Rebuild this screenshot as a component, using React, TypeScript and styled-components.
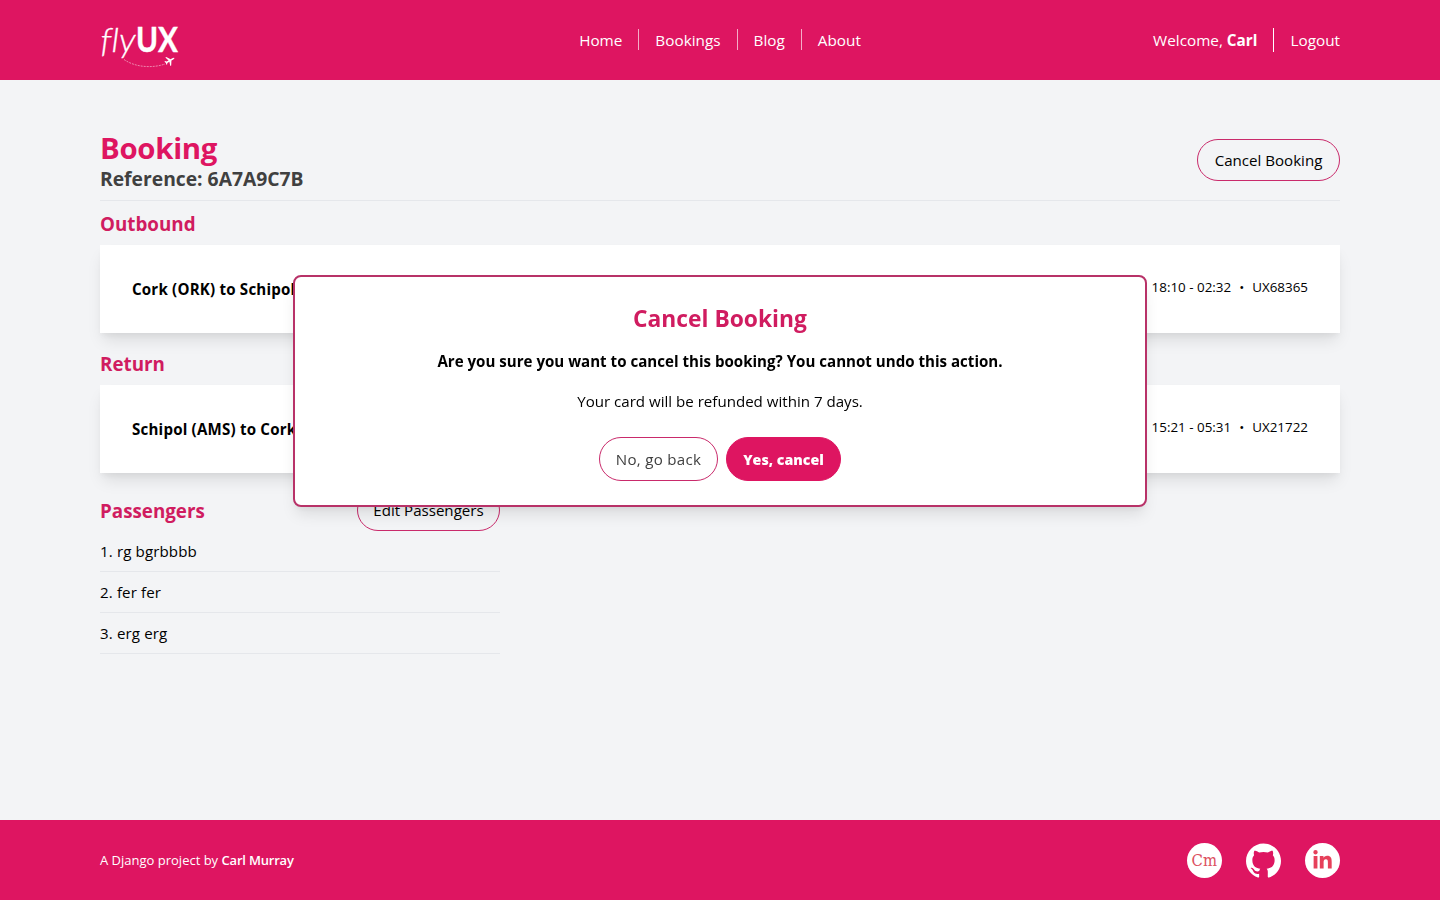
import React from "react";
import styled, { createGlobalStyle, css } from "styled-components";
import { FaLinkedinIn } from "react-icons/fa";

const PINK = "#de1561";
const PINK_DARK = "#b83268";

const GlobalStyle = createGlobalStyle`
  *, *::before, *::after { box-sizing: border-box; }
  body {
    margin: 0;
    background: #f3f4f6;
    color: #000;
    font-family: "Open Sans", "Noto Sans", sans-serif;
    font-size: 15.1px;
    line-height: 24px;
  }
  h1, h2, h3, p, ol, ul { margin: 0; padding: 0; }
  ul, ol { list-style: none; }
`;

/* A one-line text box; drop lowers the baseline by half its value. */
const line = (height: number, drop = 0) => css`
  height: ${height}px;
  line-height: ${height + drop}px;
  white-space: nowrap;
`;

const Page = styled.div`
  display: flex;
  flex-direction: column;
  min-height: 100vh;
`;

const Container = styled.div`
  width: 1240px;
  margin: 0 auto;
`;

const Header = styled.header`
  height: 80px;
  background: ${PINK};
  color: #fff;
`;

const HeaderInner = styled(Container)`
  display: grid;
  grid-template-columns: 1fr auto 1fr;
  align-items: center;
  height: 80px;
`;

const LogoLink = styled.a`
  display: block;
  height: 60px;
`;

const NavList = styled.ul<{ $end?: boolean }>`
  display: flex;
  justify-self: ${(p) => (p.$end ? "end" : "center")};
  margin-bottom: ${(p) => (p.$end ? 0 : 1)}px;
  font-size: 15.3px;
  li {
    padding: 0 16px;
    ${(p) => (p.$end ? line(24) : line(21, 1))}
  }
  li + li {
    border-left: 1px solid ${(p) => (p.$end ? "#fff" : "rgba(255, 255, 255, 0.65)")};
  }
  li:first-child { padding-left: 0; }
  li:last-child { padding-right: 0; }
`;

const Main = styled.main`
  flex: 1;
  padding-top: 40px;
`;

const TitleRow = styled.div`
  display: flex;
  align-items: center;
  justify-content: space-between;
  height: 81px;
  border-bottom: 1px solid #e5e7eb;
`;

const Title = styled.h1`
  font-size: 29.4px;
  ${line(36, 4)}
  font-weight: 700;
  color: ${PINK};
  letter-spacing: -0.3px;
`;

const Reference = styled.h2`
  font-size: 19.3px;
  ${line(28, 1)}
  font-weight: 700;
  color: #404040;
`;

const Button = styled.button<{ $width: number; $tall?: boolean; $solid?: boolean; $muted?: boolean }>`
  width: ${(p) => p.$width}px;
  height: ${(p) => (p.$tall ? 44 : 42)}px;
  padding: ${(p) => (p.$solid ? 2 : 0)}px 0 0;
  border: 1px solid ${(p) => (p.$solid ? PINK : "#c92a6b")};
  border-radius: 22px;
  background: ${(p) => (p.$solid ? PINK : "transparent")};
  color: ${(p) => (p.$solid ? "#fff" : p.$muted ? "#404040" : "#000")};
  font: inherit;
  font-size: ${(p) => (p.$solid ? 14.2 : 15.1)}px;
  font-weight: ${(p) => (p.$solid ? 800 : 400)};
  letter-spacing: ${(p) => (p.$muted ? 0.3 : 0)}px;
  white-space: nowrap;
`;

const SectionTitle = styled.h2`
  font-size: 18.8px;
  ${line(28, 3)}
  font-weight: 700;
  color: #d01c60;
`;

const Flight = styled.section`
  display: flex;
  flex-direction: column;
  gap: 8px;
  margin-top: 8px;
  & + & { margin-top: 16px; }
`;

const FlightCard = styled.div`
  display: flex;
  justify-content: space-between;
  height: 88px;
  padding: 32px;
  background: #fff;
  box-shadow: 0 10px 15px -3px rgba(0, 0, 0, 0.1), 0 4px 6px -2px rgba(0, 0, 0, 0.05);
`;

const Route = styled.h3`
  font-size: 15.1px;
  ${line(24)}
  font-weight: 700;
  letter-spacing: 0.2px;
`;

const Schedule = styled.p`
  display: flex;
  font-size: 13.4px;
  ${line(20)}
  span + span::before {
    content: "•";
    padding: 0 8px;
  }
`;

const Passengers = styled.section`
  width: 400px;
  margin-top: 16px;
`;

const PassengersHead = styled.div`
  display: flex;
  align-items: center;
  justify-content: space-between;
`;

const PassengerItem = styled.li`
  padding: 8px 0;
  border-bottom: 1px solid #e5e7eb;
  letter-spacing: 0.12px;
`;

const Modal = styled.div`
  position: fixed;
  top: 275px;
  left: 50%;
  transform: translateX(-50%);
  width: 854px;
  height: 232px;
  padding: 24px;
  border: 2px solid ${PINK_DARK};
  border-radius: 8px;
  background: #fff;
  text-align: center;
  box-shadow: 0 10px 15px -3px rgba(0, 0, 0, 0.1), 0 4px 6px -2px rgba(0, 0, 0, 0.05);
`;

const ModalTitle = styled.h2`
  font-size: 22.8px;
  ${line(32, 3)}
  font-weight: 700;
  color: #d01c60;
`;

const ModalText = styled.p<{ $strong?: boolean }>`
  margin-top: 16px;
  ${line(24)}
  font-weight: ${(p) => (p.$strong ? 700 : 400)};
`;

const Actions = styled.div`
  display: flex;
  justify-content: center;
  gap: 8px;
  margin-top: 24px;
`;

const Footer = styled.footer`
  height: 80px;
  background: ${PINK};
  color: #fff;
`;

const FooterInner = styled(Container)`
  display: flex;
  align-items: center;
  justify-content: space-between;
  height: 80px;
`;

const Credit = styled.p`
  font-size: 13px;
  ${line(20)}
  b {
    font-weight: 600;
    letter-spacing: -0.2px;
  }
`;

const Socials = styled.div`
  display: flex;
  gap: 24px;
`;

const Round = styled.a`
  display: flex;
  align-items: center;
  justify-content: center;
  width: 35px;
  height: 35px;
  border-radius: 50%;
  background: #fff;
  color: #e6405a;
`;

const Thin = styled.text`
  font-family: Lato, sans-serif;
  font-size: 34px;
  font-weight: 300;
  font-style: italic;
  font-variant-ligatures: none;
`;

const Heavy = styled.text`
  font-family: Lato, sans-serif;
  font-size: 33.5px;
  font-weight: 700;
`;

const Logo = () => (
  <svg width="80" height="60" viewBox="0 0 80 60" fill="#fff" overflow="visible">
    <Thin x="0.5" y="42" stroke="#fff" strokeWidth="0.3" textLength="35" lengthAdjust="spacingAndGlyphs">fly</Thin>
    <Heavy x="36" y="42" stroke="#fff" strokeWidth="0.4" textLength="42" lengthAdjust="spacingAndGlyphs">UX</Heavy>
    <path d="M24 49.5C36 58 54 58 65 54" fill="none" stroke="#fff" strokeOpacity="0.6" strokeWidth="0.8" strokeDasharray="2 1" />
    <g transform="translate(70 50.5) rotate(60) scale(.5)">
      <path d="M0-10C1-10 1.6-8 1.6-6V-2.4L10 3V5L1.6 2.4V7L4 9V10.5L0 9.5L-4 10.5V9L-1.6 7V2.4L-10 5V3L-1.6-2.4V-6C-1.6-8-1-10 0-10Z" />
    </g>
  </svg>
);

const GithubMark = () => (
  <svg width="35" height="35" viewBox="0 0 24 24" fill="#fff">
    <path d="M12 .297c-6.63 0-12 5.373-12 12 0 5.303 3.438 9.8 8.205 11.385.6.113.82-.258.82-.577 0-.285-.01-1.04-.015-2.04-3.338.724-4.042-1.61-4.042-1.61C4.422 18.07 3.633 17.7 3.633 17.7c-1.087-.744.084-.729.084-.729 1.205.084 1.838 1.236 1.838 1.236 1.07 1.835 2.809 1.305 3.495.998.108-.776.417-1.305.76-1.605-2.665-.3-5.466-1.332-5.466-5.93 0-1.31.465-2.38 1.235-3.22-.135-.303-.54-1.523.105-3.176 0 0 1.005-.322 3.3 1.23.96-.267 1.98-.399 3-.405 1.02.006 2.04.138 3 .405 2.28-1.552 3.285-1.23 3.285-1.23.645 1.653.24 2.873.12 3.176.765.84 1.23 1.91 1.23 3.22 0 4.61-2.805 5.625-5.475 5.92.42.36.81 1.096.81 2.22 0 1.606-.015 2.896-.015 3.286 0 .315.21.69.825.57C20.565 22.092 24 17.592 24 12.297c0-6.627-5.373-12-12-12" />
  </svg>
);

const Monogram = () => (
  <svg width="35" height="35" viewBox="0 0 35 35" fill="#dc5060">
    <text x="4.5" y="23" fontFamily="DejaVu Serif" fontSize="16" textLength="25.5" lengthAdjust="spacingAndGlyphs">Cm</text>
  </svg>
);

const flights = [
  { heading: "Outbound", route: "Cork (ORK) to Schipol (AMS)", time: "18:10 - 02:32", code: "UX68365" },
  { heading: "Return", route: "Schipol (AMS) to Cork (ORK)", time: "15:21 - 05:31", code: "UX21722" },
];

const passengers = ["rg bgrbbbb", "fer fer", "erg erg"];

export default function App() {
  return (
    <Page>
      <GlobalStyle />
      <Header>
        <HeaderInner>
          <LogoLink><Logo /></LogoLink>
          <NavList>
            {["Home", "Bookings", "Blog", "About"].map((item) => (
              <li key={item}>{item}</li>
            ))}
          </NavList>
          <NavList $end>
            <li>Welcome, <b>Carl</b></li>
            <li>Logout</li>
          </NavList>
        </HeaderInner>
      </Header>
      <Main>
        <Container>
          <TitleRow>
            <div>
              <Title>Booking</Title>
              <Reference>Reference: 6A7A9C7B</Reference>
            </div>
            <Button $width={143}>Cancel Booking</Button>
          </TitleRow>
          {flights.map((f) => (
            <Flight key={f.heading}>
              <SectionTitle>{f.heading}</SectionTitle>
              <FlightCard>
                <Route>{f.route}</Route>
                <Schedule><span>{f.time}</span><span>{f.code}</span></Schedule>
              </FlightCard>
            </Flight>
          ))}
          <Passengers>
            <PassengersHead>
              <SectionTitle>Passengers</SectionTitle>
              <Button $width={143}>Edit Passengers</Button>
            </PassengersHead>
            <ol>
              {passengers.map((name, i) => (
                <PassengerItem key={name}>{i + 1}. {name}</PassengerItem>
              ))}
            </ol>
          </Passengers>
        </Container>
      </Main>
      <Footer>
        <FooterInner>
          <Credit>A Django project by <b>Carl Murray</b></Credit>
          <Socials>
            <Round><Monogram /></Round>
            <GithubMark />
            <Round><FaLinkedinIn size={21} /></Round>
          </Socials>
        </FooterInner>
      </Footer>
      <Modal role="dialog">
        <ModalTitle>Cancel Booking</ModalTitle>
        <ModalText $strong>Are you sure you want to cancel this booking? You cannot undo this action.</ModalText>
        <ModalText>Your card will be refunded within 7 days.</ModalText>
        <Actions>
          <Button $width={119} $tall $muted>No, go back</Button>
          <Button $width={115} $tall $solid>Yes, cancel</Button>
        </Actions>
      </Modal>
    </Page>
  );
}
